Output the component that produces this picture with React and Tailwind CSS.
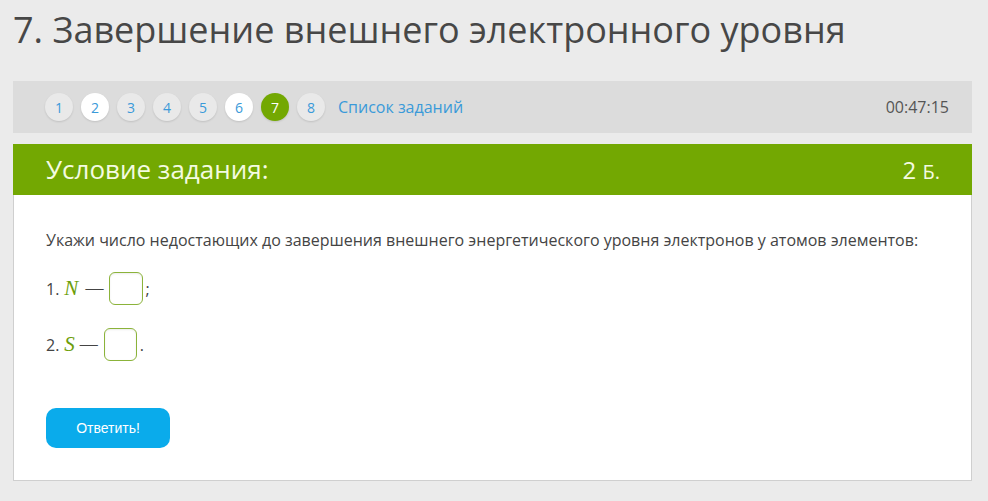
export default function App() {
  const nums = [
    { n: 1, kind: "gray" },
    { n: 2, kind: "white" },
    { n: 3, kind: "gray" },
    { n: 4, kind: "gray" },
    { n: 5, kind: "gray" },
    { n: 6, kind: "white" },
    { n: 7, kind: "green" },
    { n: 8, kind: "gray" },
  ];
  const cls = {
    gray: "bg-[#e9e9e9] text-[#3a9ad9]",
    white: "bg-white text-[#3a9ad9]",
    green: "bg-[#73a802] text-white",
  };
  return (
    <div className="w-[988px] h-[501px] bg-[#ebebeb] font-['Open_Sans',sans-serif] overflow-hidden">
      <div className="pl-[13px] pr-[16px] pt-[6px]">
        <h1 className="text-[36px] leading-[48px] text-[#474747] font-normal">
          7. Завершение внешнего электронного уровня
        </h1>
        <div className="mt-[27px] h-[52px] bg-[#dcdcdc] flex items-center pl-[32px] pr-[23px]">
          <div className="flex items-center gap-[8px]">
            {nums.map((x) => (
              <div
                key={x.n}
                className={`w-[28px] h-[28px] rounded-full flex items-center justify-center text-[14px] shadow-[0_1px_2px_rgba(0,0,0,0.12)] ${cls[x.kind]}`}
              >
                {x.n}
              </div>
            ))}
            <span className="ml-[5px] text-[16px] text-[#3a9ad9]">Список заданий</span>
          </div>
          <div className="ml-auto text-[16px] text-[#555]">00:47:15</div>
        </div>
        <div className="mt-[11px] h-[51px] bg-[#73a802] flex items-center pl-[33px] pr-[32px] text-[#f4fbe0]">
          <div className="text-[26px]">Условие задания:</div>
          <div className="ml-auto text-[24px]">
            2 <span className="text-[20px]">Б.</span>
          </div>
        </div>
        <div className="bg-white border border-t-0 border-[#cfcfcf] h-[286px] pl-[32px] pt-[34px]">
          <p className="text-[16px] text-[#444] leading-[22px]">
            Укажи число недостающих до завершения внешнего энергетического уровня электронов у атомов элементов:
          </p>
          <div className="mt-[21px] flex items-center text-[16px] text-[#444]">
            <span>1.</span>
            <span className="ml-[5px] font-['Liberation_Serif',serif] italic text-[#6d9e0a] text-[21px]">N</span>
            <span className="ml-[7px] font-['Liberation_Serif',serif] text-[18px]">—</span>
            <div className="ml-[6px] w-[34px] h-[33px] rounded-[6px] border border-[#8bb33a] bg-white shadow-[inset_0_1px_2px_rgba(0,0,0,0.08)]"></div>
            <span className="ml-[2px]">;</span>
          </div>
          <div className="mt-[23px] flex items-center text-[16px] text-[#444]">
            <span>2.</span>
            <span className="ml-[5px] font-['Liberation_Serif',serif] italic text-[#6d9e0a] text-[21px]">S</span>
            <span className="ml-[5px] font-['Liberation_Serif',serif] text-[18px]">—</span>
            <div className="ml-[6px] w-[33px] h-[33px] rounded-[6px] border border-[#8bb33a] bg-white shadow-[inset_0_1px_2px_rgba(0,0,0,0.08)]"></div>
            <span className="ml-[3px]">.</span>
          </div>
          <button className="mt-[47px] w-[124px] h-[40px] rounded-[10px] bg-[#0aabeb] text-white text-[14px] font-['Liberation_Sans',sans-serif]">
            Ответить!
          </button>
        </div>
      </div>
    </div>
  );
}
